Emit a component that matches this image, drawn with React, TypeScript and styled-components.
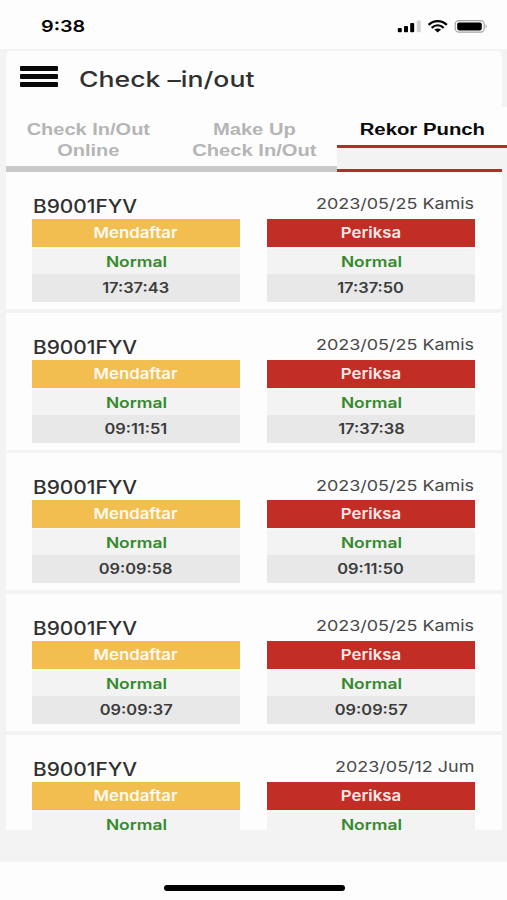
import React from 'react';
import styled, { createGlobalStyle } from 'styled-components';

const GlobalStyle = createGlobalStyle`
  * { box-sizing: border-box; }
  html, body { margin: 0; padding: 0; background: #fdfdfd; }
  body { font-family: Inter, "Liberation Sans", sans-serif; color: #333; overflow: hidden; }
`;

const Screen = styled.div`
  width: 507px;
  height: 900px;
  display: flex;
  flex-direction: column;
  background: #fdfdfd;
  overflow: hidden;
`;

/* Wide lettering: the glyphs are extended horizontally from a fixed edge. */
const Wide = styled.span<{ $k: number; $from?: 'left' | 'center' | 'right' }>`
  display: inline-block;
  white-space: nowrap;
  transform: scaleX(${(p) => p.$k});
  transform-origin: ${(p) => p.$from ?? 'center'} center;
`;

const StatusBar = styled.header`
  flex: none;
  height: 49px;
  padding: 0 19px 0 41px;
  display: flex;
  justify-content: space-between;
  align-items: flex-start;
`;

const Clock = styled.time`
  padding-top: 16px;
  font-size: 16.5px;
  line-height: 20px;
  font-weight: 600;
  color: #050505;
`;

const StatusIcons = styled.svg`
  display: block;
  margin-top: 16px;
  width: 92px;
  height: 20px;
`;

const Body = styled.main`
  flex: none;
  height: 813px;
  padding-top: 2px;
  background: #f3f3f3;
`;

const Viewport = styled.div`
  height: 779px;
  overflow: hidden;
`;

const Top = styled.section`
  height: 121px;
  margin-left: 6px;
  display: grid;
  grid-template-rows: 56px 65px;
`;

const TitleBar = styled.div`
  width: 496px;
  padding-left: 14px;
  display: flex;
  align-items: center;
  gap: 21px;
  background: #fdfdfd;
  border-radius: 5px 5px 0 0;
`;

const MenuButton = styled.button`
  width: 38px;
  height: 21px;
  margin-bottom: 5px;
  padding: 0;
  border: 0;
  background: none;
  display: flex;
  flex-direction: column;
  justify-content: space-between;
`;

const MenuLine = styled.span`
  width: 38px;
  height: 5px;
  border-radius: 1px;
  background: #080808;
`;

const Title = styled.h1`
  margin: 2px 0 0;
  font-size: 21px;
  line-height: 28px;
  font-weight: 500;
  color: #303030;
`;

const Tabs = styled.nav`
  display: grid;
  grid-template-columns: 165px 166px 170px;
`;

const Tab = styled.button<{ $active?: boolean }>`
  height: ${(p) => (p.$active ? '41px' : '65px')};
  padding: 6px 0 0;
  border: 0;
  border-bottom: ${(p) => (p.$active ? '3px solid #b92b28' : '6px solid #c9c9c9')};
  background: #fdfdfd;
  color: ${(p) => (p.$active ? '#0a0a0a' : '#b5b5b5')};
  font: 700 16px/21px "Liberation Sans", Arial, sans-serif;
  text-align: center;
`;

const ActiveTab = styled.div`
  display: flex;
  flex-direction: column;
`;

const TabTail = styled.div`
  flex: 1;
  width: 165px;
  border-bottom: 3px solid #b92b28;
`;

const List = styled.div`
  width: 496px;
  margin-left: 6px;
  display: flex;
  flex-direction: column;
  gap: 3.65px;
`;

const Card = styled.article`
  flex: none;
  height: 137px;
  padding: 19px 27px 0 26px;
  background: #fdfdfd;
`;

const CardHead = styled.div`
  height: 28px;
  display: flex;
  justify-content: space-between;
`;

const Code = styled.span`
  padding-left: 1px;
  padding-top: 5px;
  font-size: 18px;
  line-height: 22px;
  font-weight: 500;
  color: #303030;
`;

const DateLabel = styled.span`
  padding-right: 1px;
  padding-top: 3.4px;
  font-size: 15px;
  line-height: 20px;
  color: #484848;
`;

const Punches = styled.div`
  display: grid;
  grid-template-columns: 208px 208px;
  justify-content: space-between;
`;

const Punch = styled.div`
  text-align: center;
`;

const PunchKind = styled.div<{ $tone: 'in' | 'out' }>`
  height: 28px;
  background: ${(p) => (p.$tone === 'in' ? '#f2be50' : '#c22d26')};
  color: ${(p) => (p.$tone === 'in' ? '#fffaf0' : '#fbe9e7')};
  font-size: 15px;
  line-height: 28px;
  font-weight: 600;
`;

const PunchStatus = styled.div`
  height: 27px;
  border-top: 2px solid #f8f8f8;
  background: #f3f3f3;
  color: #348a2c;
  font-size: 14.5px;
  line-height: 26px;
  font-weight: 600;
`;

const PunchTime = styled.div`
  height: 28px;
  background: #e8e8e8;
  color: #3b3b3b;
  font-size: 14.5px;
  line-height: 27px;
  font-weight: 600;
`;

const HomeArea = styled.footer`
  flex: 1;
  display: flex;
  justify-content: center;
  padding-top: 23px;
  padding-left: 1px;
`;

const HomeIndicator = styled.div`
  width: 181px;
  height: 6px;
  border-radius: 3px;
  background: #000;
`;

interface PunchRecord {
  date: string;
  start?: string;
  end?: string;
}

const records: PunchRecord[] = [
  { date: '2023/05/25 Kamis', start: '17:37:43', end: '17:37:50' },
  { date: '2023/05/25 Kamis', start: '09:11:51', end: '17:37:38' },
  { date: '2023/05/25 Kamis', start: '09:09:58', end: '09:11:50' },
  { date: '2023/05/25 Kamis', start: '09:09:37', end: '09:09:57' },
  { date: '2023/05/12 Jum' },
];

function PunchCell({ tone, label, time }: { tone: 'in' | 'out'; label: string; time?: string }) {
  return (
    <Punch>
      <PunchKind $tone={tone}><Wide $k={1.12}>{label}</Wide></PunchKind>
      <PunchStatus><Wide $k={1.2}>Normal</Wide></PunchStatus>
      {time && <PunchTime><Wide $k={1.13}>{time}</Wide></PunchTime>}
    </Punch>
  );
}

export default function App() {
  return (
    <Screen>
      <GlobalStyle />
      <StatusBar>
        <Clock><Wide $k={1.2} $from="left">9:38</Wide></Clock>
        <StatusIcons viewBox="396 16 92 20" aria-hidden="true">
          <rect x="397.8" y="28" width="4" height="4.3" rx="1" />
          <rect x="404" y="26" width="4" height="6.3" rx="1" />
          <rect x="410.2" y="23" width="4" height="9.3" rx="1" />
          <rect x="416.8" y="20.5" width="4" height="11.8" rx="1" fill="#d2d2d2" />
          <g fill="none" stroke="#000" strokeWidth="2.3">
            <path d="M428.6 24.8C433.8 19.9 441.6 19.9 446.8 24.8" />
            <path d="M431.7 27.8C435.3 24.6 440.1 24.6 443.7 27.8" />
          </g>
          <path d="M434.3 29.6Q437.7 27.2 441.1 29.6L437.7 32.6Z" />
          <rect x="455.2" y="20.6" width="29" height="11.6" rx="3.6" fill="#fdfdfd" stroke="#a5a5a5" strokeWidth="1.2" />
          <rect x="457.2" y="22.4" width="24.6" height="8" rx="1.8" />
          <path d="M485.6 24.2Q488 26.4 485.6 28.6Z" fill="#a5a5a5" />
        </StatusIcons>
      </StatusBar>
      <Body>
        <Viewport>
          <Top>
            <TitleBar>
              <MenuButton aria-label="Menu"><MenuLine /><MenuLine /><MenuLine /></MenuButton>
              <Title><Wide $k={1.267} $from="left">Check –in/out</Wide></Title>
            </TitleBar>
            <Tabs>
              <Tab><Wide $k={1.25}>Check In/Out<br />Online</Wide></Tab>
              <Tab><Wide $k={1.26}>Make Up<br />Check In/Out</Wide></Tab>
              <ActiveTab>
                <Tab $active><Wide $k={1.27}>Rekor Punch</Wide></Tab>
                <TabTail />
              </ActiveTab>
            </Tabs>
          </Top>
          <List>
            {records.map((r, i) => (
              <Card key={i}>
                <CardHead>
                  <Code><Wide $k={1.16} $from="left">B9001FYV</Wide></Code>
                  <DateLabel><Wide $k={1.197} $from="right">{r.date}</Wide></DateLabel>
                </CardHead>
                <Punches>
                  <PunchCell tone="in" label="Mendaftar" time={r.start} />
                  <PunchCell tone="out" label="Periksa" time={r.end} />
                </Punches>
              </Card>
            ))}
          </List>
        </Viewport>
      </Body>
      <HomeArea><HomeIndicator /></HomeArea>
    </Screen>
  );
}
